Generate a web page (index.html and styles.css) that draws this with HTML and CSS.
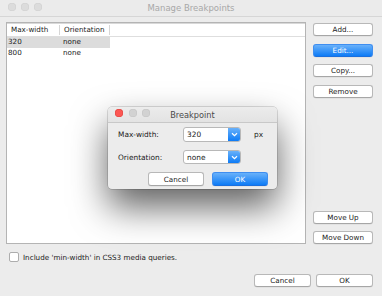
FILE: index.html
```html
<!DOCTYPE html>
<html lang="en">
<head>
  <meta charset="UTF-8" />
  <title>Manage Breakpoints</title>
  <link rel="stylesheet" href="styles.css">
</head>
<body>
  <div class="window">
    <div class="titlebar">
      <div class="lights">
        <span class="light"></span>
        <span class="light"></span>
        <span class="light"></span>
      </div>
      <div class="title">Manage Breakpoints</div>
    </div>

    <div class="content">
      <div class="main">
        <div class="table">
          <div class="thead">
            <div class="cell c1">Max-width</div>
            <div class="cell c2">Orientation</div>
          </div>
          <div class="row selected">
            <div class="cell c1">320</div>
            <div class="cell c2">none</div>
          </div>
          <div class="row">
            <div class="cell c1">800</div>
            <div class="cell c2">none</div>
          </div>
        </div>

        <div class="side">
          <div class="btn-stack">
            <button class="btn">Add...</button>
            <button class="btn primary">Edit...</button>
            <button class="btn">Copy...</button>
            <button class="btn">Remove</button>
          </div>
          <div class="btn-stack">
            <button class="btn">Move Up</button>
            <button class="btn">Move Down</button>
          </div>
        </div>
      </div>

      <label class="check">
        <span class="box"></span>
        Include 'min-width' in CSS3 media queries.
      </label>

      <div class="footer">
        <button class="btn wide">Cancel</button>
        <button class="btn wide">OK</button>
      </div>
    </div>

    <!-- Edit sheet floating above the list -->
    <div class="dialog">
      <div class="titlebar small">
        <div class="lights">
          <span class="light close"></span>
          <span class="light"></span>
          <span class="light"></span>
        </div>
        <div class="title">Breakpoint</div>
      </div>
      <div class="form">
        <div class="label">Max-width:</div>
        <div class="select">
          <span class="value">320</span>
          <span class="arrow"><svg width="7" height="5" viewBox="0 0 7 5"><path d="M1 1.2 L3.5 3.6 L6 1.2" fill="none" stroke="#fff" stroke-width="1.2"/></svg></span>
        </div>
        <div class="unit">px</div>

        <div class="label">Orientation:</div>
        <div class="select">
          <span class="value">none</span>
          <span class="arrow"><svg width="7" height="5" viewBox="0 0 7 5"><path d="M1 1.2 L3.5 3.6 L6 1.2" fill="none" stroke="#fff" stroke-width="1.2"/></svg></span>
        </div>
        <div class="unit"></div>
      </div>
      <div class="dialog-buttons">
        <button class="btn wide">Cancel</button>
        <button class="btn wide primary">OK</button>
      </div>
    </div>
  </div>
</body>
</html>
```

FILE: styles.css
```css
/* Base */
body {
  margin: 0;
  font-family: "DejaVu Sans", sans-serif;
  font-size: 7.2px;
  color: #1a1a1a;
  background-color: #ececec;
}

.window {
  position: relative;
  width: 382px;
  height: 296px;
  background-color: #ececec;
  overflow: hidden;
}

/* Title bars */
.titlebar {
  position: relative;
  height: 16px;
  background-color: #ebebeb;
  border-bottom: 1px solid #d6d6d6;
  display: flex;
  align-items: center;
  justify-content: center;
}

.titlebar .title {
  font-size: 8.5px;
  color: #a8a8a8;
}

.lights {
  position: absolute;
  left: 8px;
  top: 3px;
  display: flex;
  gap: 5px;
}

.light {
  width: 8px;
  height: 8px;
  border-radius: 50%;
  background-color: #dcdcdc;
  box-shadow: inset 0 0 0 0.5px #cfcfcf;
}

.titlebar.small {
  height: 15px;
  background: linear-gradient(#ececec, #e3e3e3);
  border-bottom: 1px solid #c8c8c8;
  border-radius: 4px 4px 0 0;
}

.titlebar.small .title {
  font-size: 8.2px;
  color: #4a4a4a;
}

.titlebar.small .lights {
  left: 7px;
  top: 2px;
  gap: 5.5px;
}

.titlebar.small .light {
  background-color: #d2d2d2;
  box-shadow: inset 0 0 0 0.5px #c4c4c4;
}

.titlebar.small .light.close {
  background-color: #fc5753;
  box-shadow: inset 0 0 0 0.5px #de3f3a;
}

/* Main content */
.content {
  padding: 5px 9px 0 6px;
}

.main {
  display: flex;
  gap: 7px;
  height: 222px;
}

.table {
  width: 298px;
  background-color: #fff;
  border: 1px solid #b4b4b4;
  box-shadow: inset 0 1px 0 #d8d8d8;
}

.thead,
.row {
  display: flex;
}

.thead {
  height: 13px;
  align-items: center;
  border-bottom: 1px solid #dedede;
}

.thead .cell {
  padding-left: 4px;
}

.thead .c2 {
  border-left: 1px solid #d6d6d6;
  border-right: 1px solid #d6d6d6;
}

.cell {
  box-sizing: border-box;
  line-height: 10px;
}

.c1 {
  width: 52px;
  padding-left: 1px;
}

.c2 {
  width: 51px;
  padding-left: 4px;
}

.row {
  width: 103px;
  height: 10.5px;
  align-items: center;
}

.row.selected {
  background-color: #dcdcdc;
}

/* Side buttons */
.side {
  width: 60px;
  padding-top: 1px;
  display: flex;
  flex-direction: column;
  justify-content: space-between;
}

.btn-stack {
  display: flex;
  flex-direction: column;
  gap: 7.5px;
}

.btn {
  height: 13px;
  padding: 0;
  font-family: inherit;
  font-size: 7.2px;
  color: #1a1a1a;
  background-color: #fff;
  border: 0.5px solid #b8b8b8;
  border-bottom-color: #a6a6a6;
  border-radius: 3px;
  box-shadow: 0 0.5px 0.5px rgba(0, 0, 0, 0.08);
}

.btn.primary {
  color: #fff;
  background: linear-gradient(#69b1fa, #0d7bf6);
  border-color: #3f8ef0;
  border-bottom-color: #1b6fdd;
}

.btn.wide {
  width: 57px;
}

/* Checkbox */
.check {
  display: flex;
  align-items: center;
  gap: 4px;
  margin: 8px 0 0 3px;
  height: 10px;
}

.box {
  box-sizing: border-box;
  width: 10px;
  height: 10px;
  background-color: #fff;
  border: 0.5px solid #adadad;
  border-radius: 2px;
}

.footer {
  display: flex;
  justify-content: flex-end;
  gap: 5px;
  margin-top: 12px;
}

/* Breakpoint dialog */
.dialog {
  position: absolute;
  left: 108px;
  top: 107px;
  width: 169px;
  height: 82px;
  background-color: #ececec;
  border-radius: 4px;
  box-shadow: 0 0 0 0.5px rgba(0, 0, 0, 0.25), 0 18px 36px rgba(0, 0, 0, 0.62);
}

.form {
  display: grid;
  grid-template-columns: 65px 58px 1fr;
  grid-template-rows: 15px 14px;
  row-gap: 8px;
  align-items: center;
  padding: 4px 0 0 10px;
}

.label {
  font-size: 7.4px;
}

.unit {
  padding-left: 13px;
  font-size: 7.4px;
}

.select {
  box-sizing: border-box;
  height: 100%;
  display: flex;
  background-color: #fff;
  border: 0.5px solid #b8b8b8;
  border-radius: 3px;
  overflow: hidden;
}

.select .value {
  flex: 1;
  display: flex;
  align-items: center;
  padding-left: 3px;
  font-size: 7.4px;
}

.select .arrow {
  width: 12px;
  display: flex;
  align-items: center;
  justify-content: center;
  background: linear-gradient(#69b1fa, #0d7bf6);
}

.dialog-buttons {
  display: flex;
  justify-content: flex-end;
  gap: 8px;
  padding: 8px 9px 0 0;
}

.dialog-buttons .btn {
  width: 56px;
  height: 14px;
}
```
